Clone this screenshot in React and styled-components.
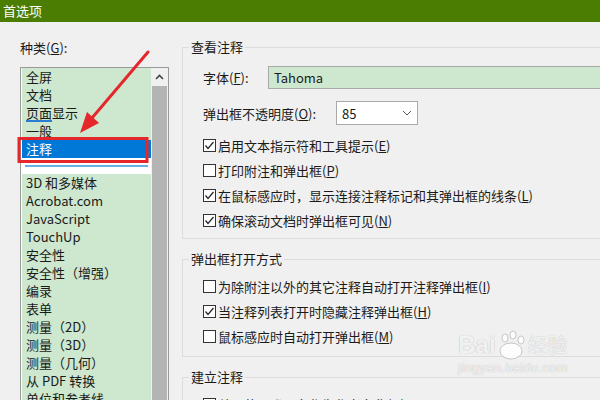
import React from "react";
import styled, { createGlobalStyle } from "styled-components";

const Global = createGlobalStyle`
  html, body { margin: 0; padding: 0; background: #f0f0f0; }
  body { font-family: "Noto Sans CJK SC", "Microsoft YaHei", sans-serif; }
`;

const Window = styled.div`
  position: relative;
  width: 600px;
  height: 400px;
  overflow: hidden;
  background: #f0f0f0;
  color: #1a1a1a;
  font-family: "Noto Sans CJK SC", sans-serif;
  font-size: 13px;
  display: flex;
  flex-direction: column;
`;

const TitleBar = styled.div`
  height: 22px;
  flex-shrink: 0;
  background: #4a7d02;
  color: #fff;
  font-size: 13px;
  line-height: 22px;
  padding-left: 3px;
`;

const Body = styled.div`
  display: flex;
  align-items: flex-start;
  gap: 13px;
  flex: 1;
  min-height: 0;
`;

const LeftPane = styled.div`
  flex-shrink: 0;
  width: 149px;
  padding: 17px 0 0 20px;
  display: flex;
  flex-direction: column;
  gap: 10px;
`;

const PaneLabel = styled.div`
  line-height: 18px;
  height: 18px;
`;

const ListBox = styled.div`
  display: flex;
  height: 340px;
  border: 1px solid #9a9a9a;
  border-bottom: none;
  background: #fff;
`;

const Items = styled.div`
  flex: 1;
  padding-left: 1px;
  display: flex;
  flex-direction: column;
`;

const Item = styled.div`
  height: 18px;
  line-height: 18px;
  padding-left: 4px;
  white-space: nowrap;
  background: ${(p) => (p.$selected ? "#0078d7" : "#cde8cf")};
  color: ${(p) => (p.$selected ? "#fff" : "#1a1a1a")};
`;

const DropGap = styled.div`
  height: 18px;
  background: #fff;
  display: flex;
  align-items: center;
  padding: 0 3px 0 3px;
`;

const DropLine = styled.div`
  flex: 1;
  height: 2px;
  background: #6aaee6;
`;

const Marked = styled.span`
  box-shadow: inset 0 -2px 0 #2b7cd3;
`;

const ScrollBar = styled.div`
  width: 17px;
  flex-shrink: 0;
  background: #f0f0f0;
  display: flex;
  flex-direction: column;
`;

const ScrollArrow = styled.div`
  height: 18px;
  display: flex;
  align-items: center;
  justify-content: center;
`;

const Thumb = styled.div`
  flex: 1;
  margin: 0 1px;
  background: #b4b4b4;
`;

const RightPane = styled.div`
  flex-shrink: 0;
  width: 440px;
  padding-top: 16px;
  display: flex;
  flex-direction: column;
  gap: 11px;
`;

const Group = styled.fieldset`
  margin: 0;
  padding: 0;
  min-width: 0;
  border: 1px solid #dcdcdc;
`;

const Legend = styled.legend`
  margin-left: 6px;
  padding: 0 2px;
  line-height: 18px;
  font-size: 13px;
`;

const GroupBody = styled.div`
  padding: ${(p) => p.$pad || "6px 0 6px 21px"};
  display: flex;
  flex-direction: column;
`;

const FieldRow = styled.div`
  display: flex;
  align-items: center;
  margin-bottom: ${(p) => p.$mb || 0}px;
`;

const FieldLabel = styled.div`
  width: ${(p) => p.$w}px;
  flex-shrink: 0;
  white-space: nowrap;
`;

const TextInput = styled.div`
  width: 340px;
  height: 21px;
  border: 1px solid #a9a9a9;
  background: #cde8cf;
  line-height: 21px;
  padding-left: 5px;
`;

const Select = styled.div`
  width: 80px;
  height: 22px;
  border: 1px solid #a9a9a9;
  background: #fff;
  display: flex;
  align-items: center;
  justify-content: space-between;
  padding: 0 5px;
  box-sizing: border-box;
  width: 82px;
  height: 24px;
`;

const CheckRow = styled.div`
  height: 25px;
  display: flex;
  align-items: center;
  gap: 2px;
  white-space: nowrap;
`;

const Box = styled.div`
  width: 11px;
  height: 11px;
  border: 1px solid #333;
  background: #fff;
  flex-shrink: 0;
  display: flex;
  align-items: center;
  justify-content: center;
`;

const Overlay = styled.svg`
  position: absolute;
  left: 0;
  top: 0;
  pointer-events: none;
`;

const Watermark = styled.div`
  position: absolute;
  left: 458px;
  top: 330px;
  display: flex;
  flex-direction: column;
  align-items: center;
  color: rgba(255, 255, 255, 0.85);
  text-shadow: 0 0 1px rgba(120, 120, 120, 0.6);
  font-family: "Liberation Sans", sans-serif;
  pointer-events: none;
`;

const MarkTop = styled.div`
  display: flex;
  align-items: flex-end;
  font-size: 24px;
  font-weight: bold;
  line-height: 30px;
`;

const MarkCn = styled.span`
  font-family: "Noto Sans CJK SC", sans-serif;
  font-size: 20px;
  font-weight: normal;
  margin-left: 2px;
`;

const MarkUrl = styled.div`
  font-size: 13px;
  letter-spacing: 0.3px;
  line-height: 16px;
`;

const Check = ({ checked }) => (
  <Box>
    {checked && (
      <svg width="11" height="11" viewBox="0 0 11 11">
        <polyline points="1.5,5.5 4,8.5 9.5,2" fill="none" stroke="#222" strokeWidth="1.2" />
      </svg>
    )}
  </Box>
);

const Opt = ({ checked, text, k }) => (
  <CheckRow>
    <Check checked={checked} />
    <span>
      {text}(<u>{k}</u>)
    </span>
  </CheckRow>
);

const before = ["全屏", "文档", null, "一般"];
const after = [
  "3D 和多媒体",
  "Acrobat.com",
  "JavaScript",
  "TouchUp",
  "安全性",
  "安全性（增强）",
  "编录",
  "表单",
  "测量（2D）",
  "测量（3D）",
  "测量（几何）",
  "从 PDF 转换",
  "单位和参考线",
];

export default function App() {
  return (
    <Window>
      <Global />
      <TitleBar>首选项</TitleBar>
      <Body>
        <LeftPane>
          <PaneLabel>
            种类(<u>G</u>):
          </PaneLabel>
          <ListBox>
            <Items>
              {before.map((t, i) =>
                t === null ? (
                  <Item key={i}>
                    <Marked>页面</Marked>显示
                  </Item>
                ) : (
                  <Item key={i}>{t}</Item>
                )
              )}
              <Item $selected>注释</Item>
              <DropGap>
                <DropLine />
              </DropGap>
              {after.map((t) => (
                <Item key={t}>{t}</Item>
              ))}
            </Items>
            <ScrollBar>
              <ScrollArrow>
                <svg width="9" height="6" viewBox="0 0 9 6">
                  <polyline points="1,5 4.5,1.5 8,5" fill="none" stroke="#444" strokeWidth="1.6" />
                </svg>
              </ScrollArrow>
              <Thumb />
            </ScrollBar>
          </ListBox>
        </LeftPane>
        <RightPane>
          <Group>
            <Legend>查看注释</Legend>
            <GroupBody $pad="10px 0 5px 20px">
              <FieldRow $mb={12}>
                <FieldLabel $w={65}>
                  字体(<u>F</u>):
                </FieldLabel>
                <TextInput>Tahoma</TextInput>
              </FieldRow>
              <FieldRow $mb={8}>
                <FieldLabel $w={133}>
                  弹出框不透明度(<u>O</u>):
                </FieldLabel>
                <Select>
                  <span>85</span>
                  <svg width="10" height="6" viewBox="0 0 10 6">
                    <polyline points="1,1 5,5 9,1" fill="none" stroke="#555" strokeWidth="1" />
                  </svg>
                </Select>
              </FieldRow>
              <Opt checked text="启用文本指示符和工具提示" k="E" />
              <Opt text="打印附注和弹出框" k="P" />
              <Opt checked text="在鼠标感应时，显示连接注释标记和其弹出框的线条" k="L" />
              <Opt checked text="确保滚动文档时弹出框可见" k="N" />
            </GroupBody>
          </Group>
          <Group>
            <Legend>弹出框打开方式</Legend>
            <GroupBody $pad="6px 0 7px 20px">
              <Opt text="为除附注以外的其它注释自动打开注释弹出框" k="I" />
              <Opt checked text="当注释列表打开时隐藏注释弹出框" k="H" />
              <Opt text="鼠标感应时自动打开弹出框" k="M" />
            </GroupBody>
          </Group>
          <Group>
            <Legend>建立注释</Legend>
            <GroupBody $pad="6px 0 7px 20px">
              <Opt text="总是使用登录名作为作者名称" k="U" />
            </GroupBody>
          </Group>
        </RightPane>
      </Body>

      <Watermark>
        <MarkTop>
          Bai
          <svg width="30" height="30" viewBox="0 0 30 30">
            <ellipse cx="9" cy="8" rx="3" ry="4" fill="rgba(255,255,255,0.85)" stroke="rgba(150,150,150,0.5)" />
            <ellipse cx="17" cy="5" rx="3" ry="4" fill="rgba(255,255,255,0.85)" stroke="rgba(150,150,150,0.5)" />
            <ellipse cx="25" cy="10" rx="3" ry="4" fill="rgba(255,255,255,0.85)" stroke="rgba(150,150,150,0.5)" />
            <ellipse cx="15" cy="21" rx="11" ry="8" fill="rgba(255,255,255,0.85)" stroke="rgba(150,150,150,0.5)" />
          </svg>
          <MarkCn>经验</MarkCn>
        </MarkTop>
        <MarkUrl>jingyan.baidu.com</MarkUrl>
      </Watermark>

      <Overlay width="600" height="400" viewBox="0 0 600 400">
        <rect x="19" y="138.5" width="128" height="23" fill="none" stroke="#e5262b" strokeWidth="3" />
        <line x1="148" y1="52" x2="92" y2="118" stroke="#e5262b" strokeWidth="3" strokeLinecap="round" />
        <polygon points="80,133 99,123 87,112" fill="#e5262b" />
      </Overlay>
    </Window>
  );
}
